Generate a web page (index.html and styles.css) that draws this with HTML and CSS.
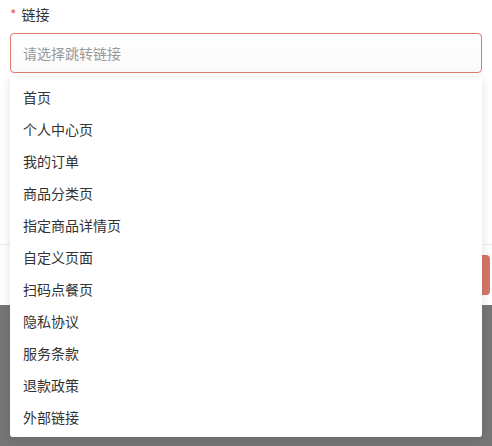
FILE: index.html
```html
<!DOCTYPE html>
<html lang="zh">
<head>
<meta charset="utf-8">
<link rel="stylesheet" href="styles.css">
</head>
<body>
<div class="dialog">
  <div class="dialog-body">
    <div class="form-label"><span class="req">*</span>链接</div>
    <div class="select">请选择跳转链接</div>
  </div>
  <div class="dialog-footer">
    <button class="btn-primary">确定</button>
  </div>
</div>
<ul class="dropdown">
  <li>首页</li>
  <li>个人中心页</li>
  <li>我的订单</li>
  <li>商品分类页</li>
  <li>指定商品详情页</li>
  <li>自定义页面</li>
  <li>扫码点餐页</li>
  <li>隐私协议</li>
  <li>服务条款</li>
  <li>退款政策</li>
  <li>外部链接</li>
</ul>
</body>
</html>
```
FILE: styles.css
```css
html, body {
  margin: 0;
  padding: 0;
}
body {
  background: #767676;
  font-family: "Noto Sans CJK SC", "Noto Sans", sans-serif;
  font-size: 14px;
  color: #333;
  height: 446px;
  overflow: hidden;
  position: relative;
}
.dialog {
  background: #fff;
  height: 305px;
  display: flex;
  flex-direction: column;
}
.dialog-body {
  height: 244px;
  padding: 4px 10px 0;
  box-sizing: border-box;
}
.form-label {
  height: 20px;
  line-height: 20px;
  margin-bottom: 9px;
  color: #333;
}
.req {
  color: #e0604f;
  margin-right: 5px;
}
.select {
  height: 40px;
  box-sizing: border-box;
  border: 1px solid #df7a6b;
  border-radius: 4px;
  background: linear-gradient(#fff, #fafafa);
  padding-left: 12px;
  display: flex;
  align-items: center;
  color: #999;
}
.dialog-footer {
  flex: 1;
  border-top: 1px solid #ebebeb;
  background: #fff;
  display: flex;
  justify-content: flex-end;
  align-items: flex-start;
  padding: 10px 2px 0 0;
}
.btn-primary {
  width: 80px;
  height: 40px;
  border: none;
  border-radius: 4px;
  background: #d47868;
  color: #fff;
  font: inherit;
}
.dropdown {
  position: absolute;
  top: 77px;
  left: 10px;
  width: 472px;
  margin: 0;
  padding: 4px 0;
  list-style: none;
  background: #fff;
  border-radius: 0 0 3px 3px;
  box-shadow: 0 2px 12px rgba(0, 0, 0, 0.12);
}
.dropdown li {
  height: 32px;
  line-height: 32px;
  padding-left: 13px;
  color: #333;
}
```
